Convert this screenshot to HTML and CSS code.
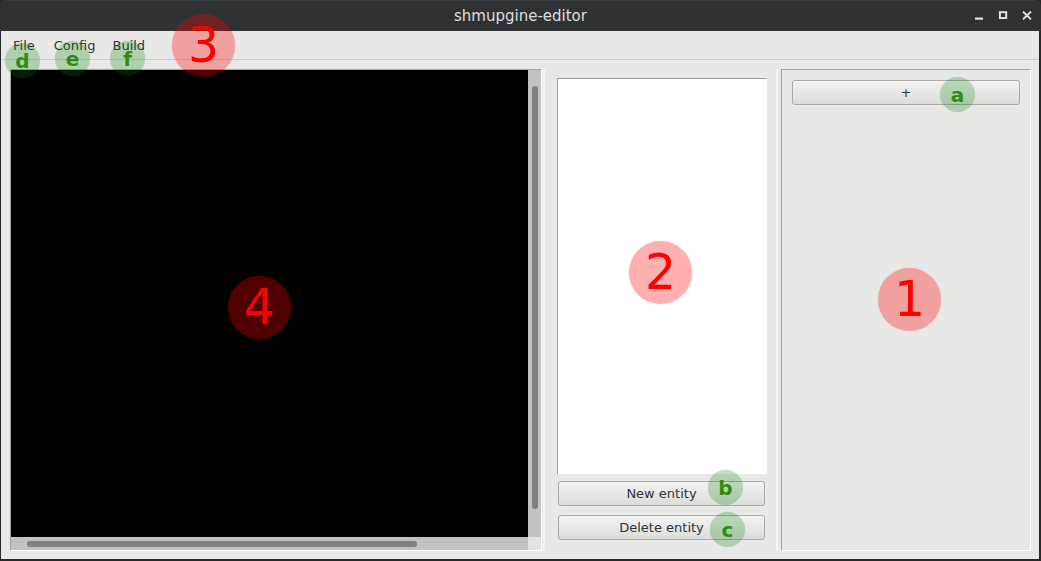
FILE: index.html
```html
<!DOCTYPE html>
<html>
<head>
<meta charset="utf-8">
<title>shmupgine-editor</title>
<link rel="stylesheet" href="styles.css">
</head>
<body>
<div class="window">
  <div class="titlebar">
    <span class="title">shmupgine-editor</span>
    <div class="controls">
      <svg class="ctl" width="10" height="10" viewBox="0 0 10 10"><rect x="1" y="6.5" width="8" height="2.2" fill="#e2e2e2"/></svg>
      <svg class="ctl" width="10" height="10" viewBox="0 0 10 10"><rect x="1.9" y="1.2" width="6.3" height="5.8" fill="none" stroke="#e2e2e2" stroke-width="2"/></svg>
      <svg class="ctl" width="10" height="10" viewBox="0 0 10 10"><path d="M1 0.6 L9 8.4 M9 0.6 L1 8.4" stroke="#e2e2e2" stroke-width="2"/></svg>
    </div>
  </div>
  <div class="body">
    <div class="menubar">
      <span class="menu-item">File</span>
      <span class="menu-item">Config</span>
      <span class="menu-item menu-build">Build</span>
    </div>
    <div class="central">
      <div class="view">
        <div class="view-row">
          <div class="canvas"></div>
          <div class="vscroll"><div class="vthumb"></div></div>
        </div>
        <div class="hscroll-row">
          <div class="hscroll"><div class="hthumb"></div></div>
          <div class="corner"></div>
        </div>
      </div>
      <div class="handle handle-a"></div>
      <div class="entities">
        <div class="list"></div>
        <button class="btn btn-new">New entity</button>
        <button class="btn btn-del">Delete entity</button>
      </div>
      <div class="handle handle-b"></div>
      <div class="props">
        <button class="btn btn-add">+</button>
      </div>
    </div>
  </div>

  <div class="mark big m3">3</div>
  <div class="mark big m4">4</div>
  <div class="mark big m2">2</div>
  <div class="mark big m1">1</div>
  <div class="mark small ma">a</div>
  <div class="mark small mb">b</div>
  <div class="mark small mc">c</div>
  <div class="mark small md">d</div>
  <div class="mark small me">e</div>
  <div class="mark small mf">f</div>
</div>
</body>
</html>
```
FILE: styles.css
```css
html, body {
  margin: 0;
  padding: 0;
  background: #26282a;
  width: 1041px;
  height: 561px;
  overflow: hidden;
}

.window {
  position: relative;
  width: 1041px;
  height: 561px;
  display: flex;
  flex-direction: column;
  font-family: "DejaVu Sans", sans-serif;
}

.titlebar {
  height: 31px;
  flex: none;
  background: #2e3235;
  border-radius: 7px 7px 0 0;
  display: flex;
  align-items: center;
  justify-content: center;
  position: relative;
  box-sizing: border-box;
  border-top: 1px solid #383c40;
}

.title {
  color: #dedfdf;
  font-size: 15px;
  margin-top: -1px;
}

.controls {
  position: absolute;
  right: 9px;
  top: 10px;
  display: flex;
  gap: 14px;
}

.ctl {
  display: block;
}

.body {
  flex: 1;
  margin: 0 2px 2px 1px;
  background: #e8e8e7;
  display: flex;
  flex-direction: column;
}

.menubar {
  height: 28px;
  flex: none;
  border-bottom: 1px solid #cbcbc9;
  display: flex;
  align-items: center;
  padding-left: 12px;
  gap: 19px;
  font-size: 13px;
  color: #2e3436;
}

.menu-item {
  padding-top: 1px;
}

.menu-build {
  margin-left: -2px;
}

.central {
  flex: 1;
  display: flex;
  padding: 9px 8px 8px 9px;
}

.view {
  width: 532px;
  height: 482px;
  box-sizing: border-box;
  border-top: 1px solid #a3a3a1;
  border-left: 1px solid #a3a3a1;
  border-right: 1px solid #ffffff;
  border-bottom: 1px solid #ffffff;
  display: flex;
  flex-direction: column;
  flex: none;
}

.view-row {
  display: flex;
  height: 467px;
}

.canvas {
  width: 517px;
  background: #000;
}

.vscroll {
  width: 13px;
  background: #c2c3c0;
  position: relative;
}

.vthumb {
  margin: 16px 0 0 4px;
  width: 6px;
  height: 423px;
  border-radius: 3px;
  background: #7f817e;
}

.hscroll-row {
  display: flex;
  height: 13px;
}

.hscroll {
  width: 517px;
  background: #c2c3c0;
}

.hthumb {
  margin: 4px 0 0 16px;
  height: 6px;
  width: 390px;
  border-radius: 3px;
  background: #7f817e;
}

.corner {
  width: 13px;
  background: #e3e3e1;
}

.handle {
  flex: none;
  height: 482px;
  background-image: repeating-conic-gradient(#ffffff 0 25%, transparent 0 50%);
  background-size: 2px 2px;
  background-repeat: repeat-y;
}

.handle-a {
  width: 6px;
  background-position: 1px 0;
  background-clip: content-box;
  padding: 0 1px;
  box-sizing: border-box;
}

.handle-b {
  width: 5px;
  background-clip: content-box;
  padding: 0 1px 0 0;
  box-sizing: border-box;
}

.entities {
  width: 228px;
  flex: none;
  box-sizing: border-box;
  padding: 9px 9px 0 9px;
  display: flex;
  flex-direction: column;
}

.list {
  height: 396px;
  flex: none;
  box-sizing: border-box;
  background: #ffffff;
  border-top: 1px solid #9f9f9d;
  border-left: 1px solid #9f9f9d;
}

.btn {
  display: block;
  box-sizing: border-box;
  height: 25px;
  margin: 0 2px 0 1px;
  padding: 0;
  border: 1px solid #a9a9a7;
  border-radius: 3px;
  background: linear-gradient(#f3f3f2, #dcdcda);
  font-family: "DejaVu Sans", sans-serif;
  font-size: 13px;
  color: #2e3436;
  line-height: 22px;
  text-align: center;
}

.btn-new {
  margin-top: 7px;
}

.btn-del {
  margin-top: 9px;
}

.props {
  width: 250px;
  height: 482px;
  flex: none;
  box-sizing: border-box;
  border-top: 1px solid #a3a3a1;
  border-left: 1px solid #a3a3a1;
  border-right: 1px solid #ffffff;
  border-bottom: 1px solid #ffffff;
  padding: 10px 10px 0 10px;
}

.btn-add {
  width: 100%;
  margin: 0;
}

/* annotation markers */
.mark {
  position: absolute;
  border-radius: 50%;
  display: flex;
  align-items: center;
  justify-content: center;
  font-family: "DejaVu Sans", sans-serif;
  line-height: 1;
}

.big {
  width: 63px;
  height: 63px;
  background: rgba(255, 0, 0, 0.31);
  color: #ff0000;
  font-size: 49px;
  box-shadow: 0 0 1.5px rgba(255, 0, 0, 0.25);
}

.small {
  width: 35px;
  height: 35px;
  background: rgba(0, 128, 0, 0.24);
  color: #2e8c0c;
  font-size: 20px;
  font-weight: bold;
  box-shadow: 0 0 1px rgba(0, 128, 0, 0.2);
}

.m3 { left: 172px; top: 14px; }
.m4 { left: 228px; top: 276px; }
.m2 { left: 629px; top: 241px; }
.m1 { left: 878px; top: 268px; }
.ma { left: 940px; top: 77px; }
.mb { left: 708px; top: 470px; }
.mc { left: 710px; top: 512px; }
.md { left: 5px; top: 43px; }
.me { left: 55px; top: 41px; }
.mf { left: 110px; top: 41px; }
```
